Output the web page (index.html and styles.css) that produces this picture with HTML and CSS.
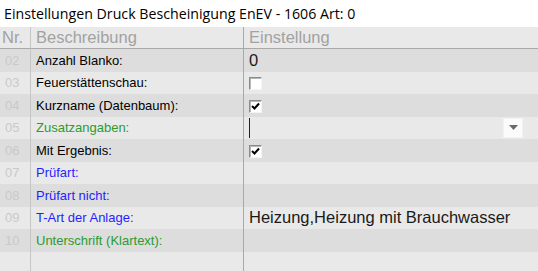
FILE: index.html
```html
<!DOCTYPE html>
<html lang="de">
<head>
    <meta charset="UTF-8">
    <meta name="viewport" content="width=device-width, initial-scale=1.0">
    <title>Einstellungen Druck Bescheinigung EnEV</title>
    <link rel="stylesheet" href="styles.css">
</head>
<body>
    <div class="titel">Einstellungen Druck Bescheinigung EnEV - 1606 Art: 0</div>

    <table class="raster">
        <thead>
            <tr>
                <th class="nr">Nr.</th>
                <th class="beschreibung">Beschreibung</th>
                <th class="wert">Einstellung</th>
            </tr>
        </thead>
        <tbody>
            <tr class="dunkel">
                <td class="nr">02</td>
                <td class="beschreibung">Anzahl Blanko:</td>
                <td class="wert gross">0</td>
            </tr>
            <tr>
                <td class="nr">03</td>
                <td class="beschreibung">Feuerstättenschau:</td>
                <td class="wert"><span class="kasten"></span></td>
            </tr>
            <tr class="dunkel">
                <td class="nr">04</td>
                <td class="beschreibung">Kurzname (Datenbaum):</td>
                <td class="wert"><span class="kasten"><svg width="11" height="11" viewBox="0 0 11 11"><polyline points="2,5 4.5,7.5 9,2.5" fill="none" stroke="#000" stroke-width="2"/></svg></span></td>
            </tr>
            <tr>
                <td class="nr">05</td>
                <td class="beschreibung gruen">Zusatzangaben:</td>
                <td class="wert">
                    <div class="editor">
                        <span class="cursor"></span>
                        <span class="aufklapp"><svg width="9" height="5" viewBox="0 0 9 5"><polygon points="0,0 9,0 4.5,5" fill="#6a6a6a"/></svg></span>
                    </div>
                </td>
            </tr>
            <tr class="dunkel">
                <td class="nr">06</td>
                <td class="beschreibung">Mit Ergebnis:</td>
                <td class="wert"><span class="kasten"><svg width="11" height="11" viewBox="0 0 11 11"><polyline points="2,5 4.5,7.5 9,2.5" fill="none" stroke="#000" stroke-width="2"/></svg></span></td>
            </tr>
            <tr>
                <td class="nr">07</td>
                <td class="beschreibung blau">Prüfart:</td>
                <td class="wert"></td>
            </tr>
            <tr class="dunkel">
                <td class="nr">08</td>
                <td class="beschreibung blau">Prüfart nicht:</td>
                <td class="wert"></td>
            </tr>
            <tr>
                <td class="nr">09</td>
                <td class="beschreibung blau">T-Art der Anlage:</td>
                <td class="wert gross">Heizung,Heizung mit Brauchwasser</td>
            </tr>
            <tr class="dunkel">
                <td class="nr">10</td>
                <td class="beschreibung gruen">Unterschrift (Klartext):</td>
                <td class="wert"></td>
            </tr>
            <tr class="leer">
                <td class="nr"></td>
                <td class="beschreibung"></td>
                <td class="wert"></td>
            </tr>
        </tbody>
    </table>
</body>
</html>
```

FILE: styles.css
```css
body {
    margin: 0;
    height: 271px;
    overflow: hidden;
    background-color: #ffffff;
    font-family: "Liberation Sans", Arial, sans-serif;
}
.titel {
    height: 27px;
    line-height: 27px;
    padding-left: 4px;
    font-family: "Open Sans", "Noto Sans", sans-serif;
    font-size: 14.2px;
    color: #000000;
    white-space: nowrap;
}
.raster {
    width: 100%;
    table-layout: fixed;
    border-collapse: separate;
    border-spacing: 0;
    background-color: #e9e9e9;
}
.raster th,
.raster td {
    box-sizing: border-box;
    padding: 0;
    white-space: nowrap;
    overflow: hidden;
    vertical-align: middle;
    text-align: left;
}
.raster th {
    height: 22px;
    font-weight: normal;
    font-size: 16.5px;
    color: #a2a2a2;
    border-bottom: 1px solid #a9a9a9;
}
.raster td {
    height: 22.5px;
    font-size: 13px;
    color: #000000;
}
.raster .nr {
    width: 31px;
    border-right: 1px solid #c6c6c6;
}
th.nr {
    padding-left: 2px;
}
td.nr {
    padding-left: 5px;
    color: #c9c9c9;
}
.raster .beschreibung {
    width: 213px;
    padding-left: 5px;
    border-right: 1px solid #a9a9a9;
}
.raster .wert {
    padding-left: 5px;
}
.raster .gross {
    font-size: 16.5px;
    color: #1a1a1a;
}
.dunkel td {
    background-color: #dddddd;
}
.leer td {
    height: 20px;
}
.gruen {
    color: #2e9a2e !important;
}
.blau {
    color: #1f1fff !important;
}
.kasten {
    display: inline-flex;
    align-items: center;
    justify-content: center;
    box-sizing: border-box;
    width: 13px;
    height: 13px;
    vertical-align: middle;
    background-color: #ffffff;
    border: 1px solid;
    border-color: #8a8a8a #f4f4f4 #f4f4f4 #8a8a8a;
    box-shadow: inset 1px 1px #b8b8b8;
}
.editor {
    display: flex;
    align-items: center;
    height: 22px;
}
.cursor {
    width: 1px;
    height: 20px;
    background-color: #222222;
}
.aufklapp {
    display: flex;
    align-items: center;
    justify-content: center;
    box-sizing: border-box;
    width: 20px;
    height: 20px;
    margin-left: auto;
    margin-right: 15px;
    background-color: #fbfbfb;
    border: 1px solid #f2f2f2;
}
```
